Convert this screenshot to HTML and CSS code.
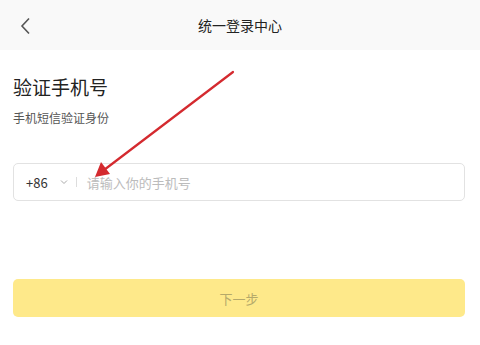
FILE: index.html
```html
<!DOCTYPE html>
<html lang="zh">
<head>
    <meta charset="UTF-8">
    <meta name="viewport" content="width=device-width, initial-scale=1.0">
    <title>统一登录中心</title>
    <link rel="stylesheet" href="styles.css">
</head>
<body>
    <div class="header">
        <span class="back">
            <svg width="12" height="18" viewBox="0 0 12 18"><path d="M9 1.5 L2 9 L9 16.5" fill="none" stroke="#555" stroke-width="1.6"/></svg>
        </span>
        <span class="title">统一登录中心</span>
    </div>

    <div class="content">
        <h1>验证手机号</h1>
        <p class="sub">手机短信验证身份</p>

        <div class="phone-box">
            <span class="code">+86</span>
            <svg class="caret" width="8" height="6" viewBox="0 0 8 6"><path d="M1 1.5 L4 4.5 L7 1.5" fill="none" stroke="#aaa" stroke-width="1"/></svg>
            <span class="sep"></span>
            <span class="placeholder">请输入你的手机号</span>
        </div>

        <button class="next">下一步</button>
    </div>

    <!-- 标注箭头 -->
    <svg class="mark" width="480" height="345" viewBox="0 0 480 345">
        <line x1="233" y1="72" x2="104" y2="170" stroke="#d42a2f" stroke-width="2.2" stroke-linecap="round"/>
        <polygon points="95,177 101,162 110,174" fill="#d42a2f"/>
    </svg>
</body>
</html>
```

FILE: styles.css
```css
body {
    margin: 0;
    padding: 0;
    background: #ffffff;
    font-family: "Noto Sans CJK SC", "Noto Sans", sans-serif;
    color: #222;
    width: 480px;
    height: 345px;
    overflow: hidden;
}

.header {
    height: 50px;
    background: #f9f9f9;
    display: flex;
    align-items: center;
    justify-content: center;
    position: relative;
}

.back {
    position: absolute;
    left: 20px;
    top: 16px;
    height: 18px;
}

.title {
    font-size: 14px;
    color: #222;
}

.content {
    padding: 0 15px 0 13px;
}

h1 {
    margin: 23px 0 0;
    font-size: 19px;
    font-weight: normal;
    line-height: 28px;
    color: #222;
}

.sub {
    margin: 8px 0 0;
    font-size: 12px;
    line-height: 18px;
    color: #555;
}

.phone-box {
    margin-top: 36px;
    height: 36px;
    border: 1px solid #e2e2e2;
    border-radius: 5px;
    display: flex;
    align-items: center;
    padding-left: 12px;
    font-size: 13px;
}

.code {
    color: #333;
}

.caret {
    margin-left: 12px;
}

.sep {
    width: 1px;
    height: 10px;
    background: #ddd;
    margin: 0 10px 0 8px;
}

.placeholder {
    color: #bcbcbc;
}

.next {
    display: block;
    width: 100%;
    height: 38px;
    margin-top: 78px;
    border: none;
    border-radius: 5px;
    background: #fee98a;
    color: #b5a96a;
    font-size: 13px;
    font-family: inherit;
}

.mark {
    position: absolute;
    left: 0;
    top: 0;
    pointer-events: none;
}
```
